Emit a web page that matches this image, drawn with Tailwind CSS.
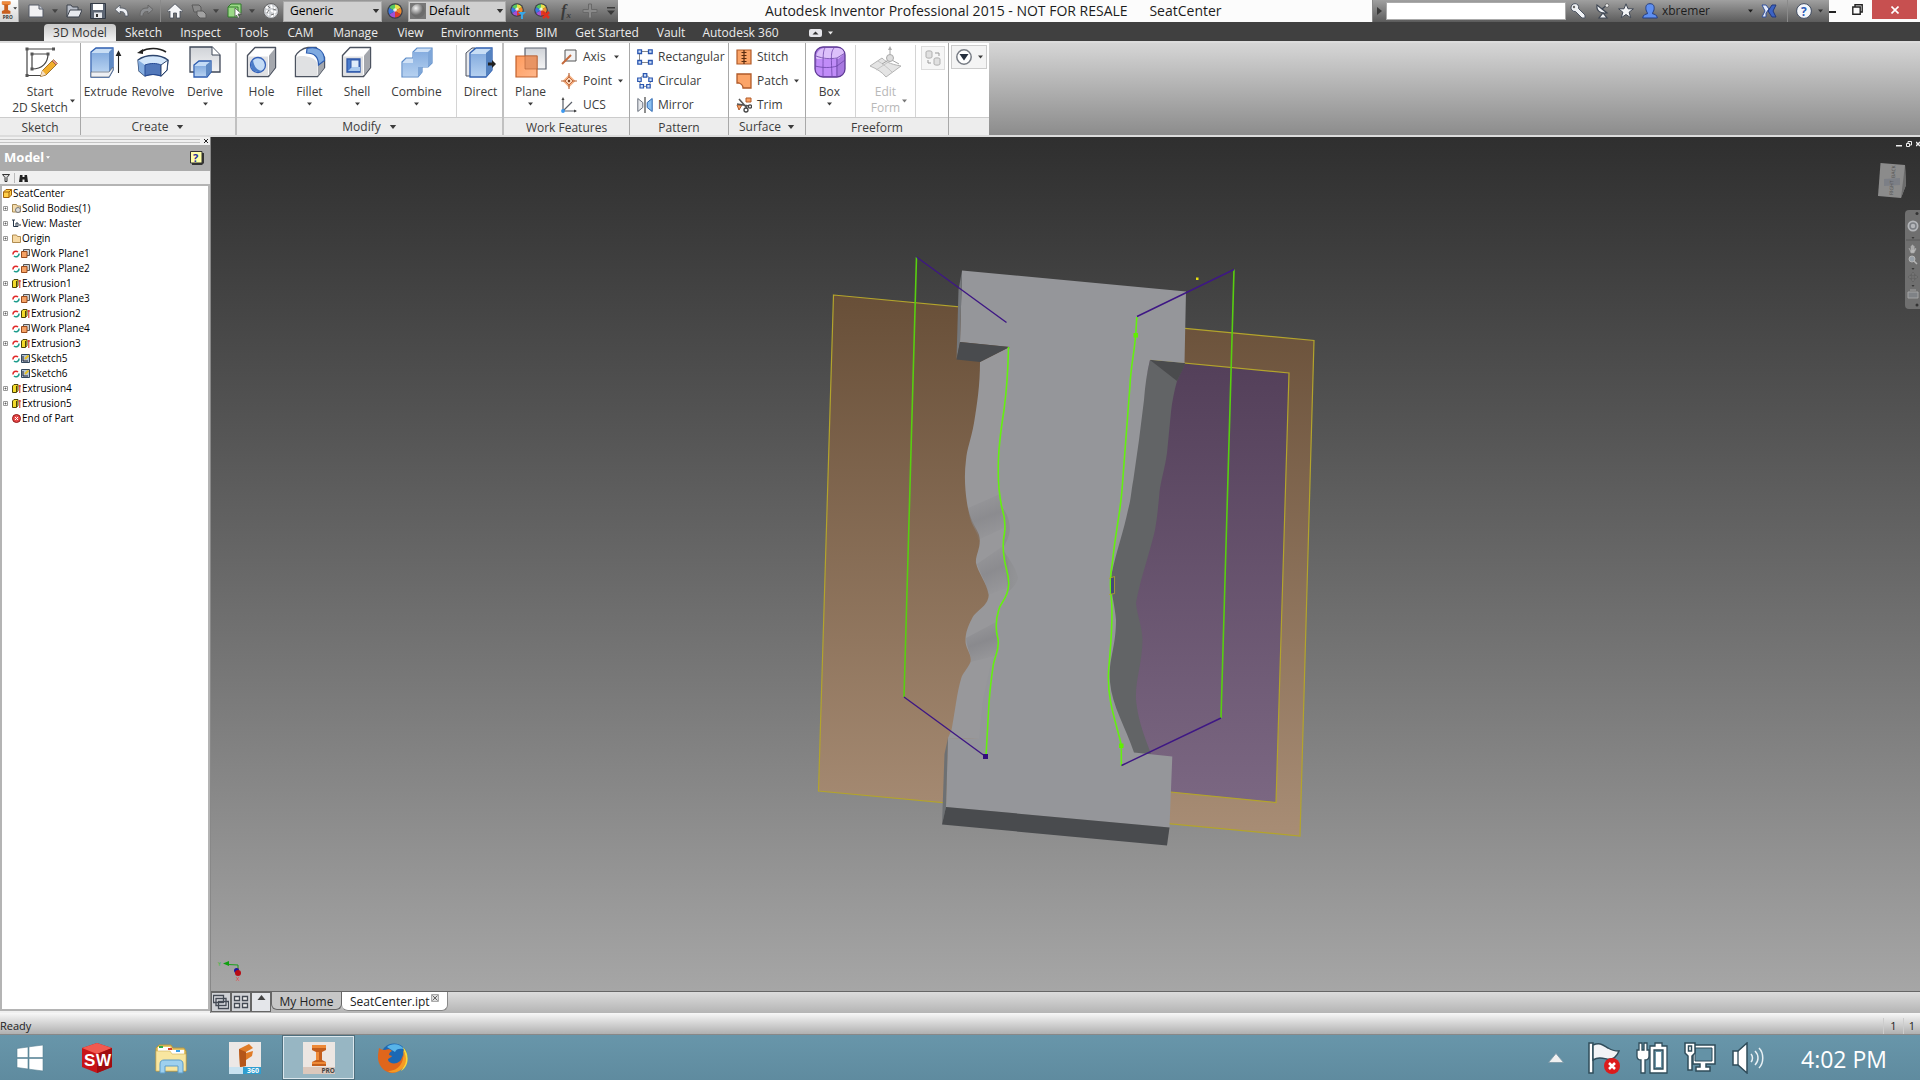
<!DOCTYPE html>
<html lang="en">
<head>
<meta charset="utf-8">
<title>Autodesk Inventor Professional 2015</title>
<script src="https://cdn.jsdelivr.net/npm/@tailwindcss/browser@4"></script>
</head>
<body class="flex h-screen flex-col overflow-hidden bg-[#f0f0f0] font-['Open_Sans','Noto_Sans',sans-serif] text-xs text-[#3c3c3c]">

<!-- Shared symbols and gradients -->
<svg class="absolute size-0" aria-hidden="true">
  <defs>
    <linearGradient id="blue" x1="0" y1="0" x2="0" y2="1"><stop offset="0" stop-color="#86addf"/><stop offset="1" stop-color="#b4d0f0"/></linearGradient>
    <linearGradient id="grey" x1="0" y1="0" x2="0" y2="1"><stop offset="0" stop-color="#d0d3d8"/><stop offset="1" stop-color="#f4f4f5"/></linearGradient>
    <linearGradient id="orange" x1="0" y1="0" x2="1" y2="1"><stop offset="0" stop-color="#ff9a5c"/><stop offset="1" stop-color="#ffb88c"/></linearGradient>
    <linearGradient id="planeFill" x1="0" y1="0" x2="0" y2="1"><stop offset="0" stop-color="#684f38"/><stop offset="1" stop-color="#a88d75"/></linearGradient>
    <linearGradient id="violetFill" x1="0" y1="0" x2="0" y2="1"><stop offset="0" stop-color="#533f59"/><stop offset="1" stop-color="#7b6782"/></linearGradient>
    <linearGradient id="fold" x1=".35" y1="0" x2=".65" y2="1"><stop offset="0" stop-color="#86868a" stop-opacity="0"/><stop offset=".5" stop-color="#86868a"/><stop offset="1" stop-color="#86868a" stop-opacity="0"/></linearGradient>
    <linearGradient id="bump" x1="0" y1="0" x2="1" y2=".3"><stop offset="0" stop-color="#8a8a8d"/><stop offset="1" stop-color="#929396"/></linearGradient>
    <radialGradient id="ball" cx=".35" cy=".3"><stop offset="0" stop-color="#f4f4f4"/><stop offset="1" stop-color="#6c6c6c"/></radialGradient>
  </defs>
  <symbol id="caret" viewBox="0 0 8 5"><path d="M0 0h8L4 5z" fill="currentColor"/></symbol>
  <symbol id="cubebase" viewBox="0 0 32 32">
    <path d="M1.500 9.500 9 1.500h20.500v20l-7 9h-21z" fill="#fff" stroke="#4c5360" stroke-width="1.400" stroke-linejoin="round"/>
    <path d="M23 9.500l6-7v19l-6 8z" fill="#a4a7ad"/>
    <path d="M2.500 10.500H22v19H2.500z" fill="#e0e1e3"/>
  </symbol>
  <symbol id="wheel" viewBox="0 0 16 16">
    <circle cx="8" cy="8" r="7.800" fill="#3b3f48"/>
    <path d="M8 8V1.500A6.500 6.500 0 0 1 13.600 4.700z" fill="#e8e24a"/><path d="M8 8l5.600-3.300a6.500 6.500 0 0 1 0 6.600z" fill="#ee8a2c"/>
    <path d="M8 8l5.600 3.300A6.500 6.500 0 0 1 8 14.500z" fill="#e03c2c"/><path d="M8 8v6.500a6.500 6.500 0 0 1-5.600-3.200z" fill="#a050d8"/>
    <path d="M8 8l-5.600 3.300a6.500 6.500 0 0 1 0-6.600z" fill="#3878e0"/><path d="M8 8L2.400 4.700A6.500 6.500 0 0 1 8 1.500z" fill="#58c860"/>
    <circle cx="8" cy="7" r="1.800" fill="#fff" opacity=".8"/>
  </symbol>
  <symbol id="upd" viewBox="0 0 8 8"><path d="M1 4.500a3 3 0 0 1 5-2.500" fill="none" stroke="#e02828" stroke-width="1.500"/><path d="M7 3.500a3 3 0 0 1-5 2.500" fill="none" stroke="#1d9c8c" stroke-width="1.500"/></symbol>
  <symbol id="wp" viewBox="0 0 9 9"><path d="M2.500.5h6v6h-6z" fill="#cfd2d6" stroke="#555"/><path d="M.5 2.500h5.500v6H.5z" fill="#f5a265" stroke="#9a4b1c"/></symbol>
  <symbol id="ext" viewBox="0 0 9 9"><path d="M.5 2L2 .5h4v6L4.500 8.500h-4z" fill="#f3dc2a" stroke="#4d4308"/><path d="M4.500 2v6" stroke="#4d4308"/><path d="M7.800 9V1M6.500 2h2.500" stroke="#d02818" fill="none"/></symbol>
  <symbol id="sk" viewBox="0 0 9 9"><path d="M.5.5h8v8h-8z" fill="#b4c4d6" stroke="#33475c"/><path d="M2 7h5M2 7V2" stroke="#223" fill="none"/><path d="M4 5L7.500 1.500" stroke="#e8c020" stroke-width="2"/></symbol>
  <symbol id="plus" viewBox="0 0 5 5"><path d="M.5.5h4v4h-4z" fill="#fff" stroke="#9a9a9a"/><path d="M1.500 2.500h2M2.500 1.500v2" stroke="#555" stroke-width=".8"/></symbol>
</svg>

<!-- Title bar -->
<header class="flex h-[22px] shrink-0 items-stretch bg-[#fcfcfc]">
  <div class="flex w-[618px] shrink-0 items-center bg-linear-to-b from-[#989898] to-[#5c5c5c]">
    <button aria-label="Application menu" class="flex h-full w-[19px] items-center border-r border-[#aaa] bg-linear-to-b from-white to-[#d4d4d4]">
      <svg class="h-5 w-[19px]" viewBox="0 0 19 20"><path d="M2 0h9v3L8.500 4v5l2.500 1v3H2v-3l2.500-1V4L2 3z" fill="#c9601f"/><path d="M2 0h9v3H2z" fill="#ef8a3c"/><text x="3" y="18.500" font-size="5" font-weight="700" fill="#333">PRO</text><path d="M14 6h4l-2 2.500z" fill="#333"/></svg>
    </button>
    <nav aria-label="Quick access" class="flex h-full w-[264px] shrink-0 items-center pl-[9px] text-[#444]">
      <button aria-label="New" class="w-4"><svg class="size-4" viewBox="0 0 16 16"><path d="M1 2h10l4 4v8H1z" fill="#f1f1f3" stroke="#555b66"/><path d="M11 2v4h4" fill="#c4c8cf" stroke="#555b66"/></svg></button>
      <svg class="ml-2 mr-2 h-1 w-1.5"><use href="#caret"/></svg>
      <button aria-label="Open" class="w-4"><svg class="size-4" viewBox="0 0 16 16"><path d="M1 14V2h4l1.500 2H12v3" fill="#b9bec8" stroke="#3d434d"/><path d="M1 14L4 7h12l-3 7z" fill="#e8eaee" stroke="#3d434d"/></svg></button>
      <button aria-label="Save" class="ml-2 w-4"><svg class="size-4" viewBox="0 0 16 16"><path d="M.5.5h15v15H.5z" fill="#5d6674" stroke="#333943"/><path d="M3 1h10v6H3z" fill="#fff"/><path d="M4 9.500h8V15H4z" fill="#e6e8ec"/><path d="M6 11h2v3H6z" fill="#333"/></svg></button>
      <button aria-label="Undo" class="ml-2 w-4"><svg class="size-4" viewBox="0 0 16 16"><path d="M6 2v3c6 0 8 2 8 8h-3c0-3-1-4.500-5-4.500V11L1 6.500z" fill="#eef0f4" stroke="#4c5460" stroke-width=".8"/></svg></button>
      <button aria-label="Redo" class="ml-2 w-4"><svg class="size-4" viewBox="0 0 16 16"><path d="M10 2v3c-6 0-8 2-8 8h3c0-3 1-4.500 5-4.500V11l5-4.500z" fill="#8d8f92" stroke="#666"/></svg></button>
      <span class="mx-1.5 h-full w-px bg-[#8a8a8a]"></span>
      <button aria-label="Home" class="w-4"><svg class="size-4" viewBox="0 0 16 16"><path d="M8 .8l7.500 7-1.200 1.200L13 8v7H9.500v-5h-3v5H3V8L1.700 9 .5 7.800z" fill="#f4f5f7" stroke="#434a56" stroke-width=".8"/></svg></button>
      <button aria-label="Update" class="ml-2 w-4"><svg class="size-4" viewBox="0 0 16 16"><path d="M1 2h7l2 2v5H3z" fill="#8b8b8b" stroke="#5a5a5a"/><path d="M6 8h6l3 3v4H9l-3-3z" fill="#a2a2a2" stroke="#5a5a5a"/></svg></button>
      <svg class="ml-1.5 mr-2 h-1 w-1.5"><use href="#caret"/></svg>
      <button aria-label="Select" class="w-4"><svg class="size-4" viewBox="0 0 16 16"><path d="M1 4l3-3h10v9l-3 4H1z" fill="#9bd987" stroke="#2f7a28"/><path d="M1 4h10v10" fill="none" stroke="#2f7a28"/><path d="M8 5l6.500 6H11l1.500 3.500-1.500.7L9.500 12 8 13.500z" fill="#fff" stroke="#444" stroke-width=".7"/></svg></button>
      <svg class="ml-1.5 mr-2 h-1 w-1.5"><use href="#caret"/></svg>
      <button aria-label="Material browser" class="w-4"><svg class="size-4" viewBox="0 0 16 16"><circle cx="8" cy="8" r="7.500" fill="#c9ccd0" stroke="#666"/><path d="M3 4l2 1M8 2l1 3M12 4l-1 2M3 8l3 1M8 7l2 2M13 8l-2 2M5 12l1-1M9 14v-2M12 12l-1-1" stroke="#fff" stroke-width="2"/><path d="M5 3l2 2M10 6l3 1M6 7l-2 3M11 11l-3 1" stroke="#777"/></svg></button>
    </nav>
    <span class="relative flex h-[21px] w-[99px] items-center">
      <select aria-label="Material" class="h-full w-full appearance-none border border-[#aaa] bg-[#cfcfcf] pl-1.5 text-xs text-black"><option>Generic</option></select>
      <svg class="pointer-events-none absolute right-0.5 h-1 w-2 text-[#333]"><use href="#caret"/></svg>
    </span>
    <svg class="mx-[5px] size-4"><use href="#wheel"/></svg>
    <span class="relative flex h-[21px] w-[98px] items-center">
      <select aria-label="Appearance" class="h-full w-full appearance-none border border-[#aaa] bg-[#cfcfcf] pl-5 text-xs text-black"><option>Default</option></select>
      <svg class="pointer-events-none absolute left-0.5 size-4" viewBox="0 0 16 16"><path d="M0 0h16v16H0z" fill="#777"/><circle cx="8" cy="8" r="7" fill="url(#ball)"/></svg>
      <svg class="pointer-events-none absolute right-0.5 h-1 w-2 text-[#333]"><use href="#caret"/></svg>
    </span>
    <nav aria-label="Appearance tools" class="flex items-center gap-2 pl-1 text-[#3a3a3a]">
      <button aria-label="Adjust"><svg class="block size-4" viewBox="0 0 16 16"><use href="#wheel" width="14" height="14"/><path d="M8 9h8l-3 3v4h-2v-4z" fill="#38a8e8"/></svg></button>
      <button aria-label="Clear"><svg class="block size-4" viewBox="0 0 16 16"><use href="#wheel" width="14" height="14"/><path d="M9 9l6 6M15 9l-6 6" stroke="#e0301c" stroke-width="2.500"/></svg></button>
      <button aria-label="Parameters" class="w-4 font-['Liberation_Serif',serif] text-base leading-4 font-bold italic">f<sub class="text-[9px]">x</sub></button>
      <button aria-label="Add"><svg class="block size-4" viewBox="0 0 16 16"><path d="M6.500 1h3v5.500H15v3H9.500V15h-3V9.500H1v-3h5.500z" fill="#8a8a8a" stroke="#686868"/></svg></button>
      <button aria-label="Customize"><svg class="block h-2 w-2.5" viewBox="0 0 10 8"><path d="M1 0h8v1.500H1zM1 3.500h8L5 8z" fill="currentColor"/></svg></button>
    </nav>
  </div>
  <h1 class="flex-1 pl-[147px] text-[14px] leading-[22px] whitespace-pre text-[#1c1c1c]">Autodesk Inventor Professional 2015 - NOT FOR RESALE      SeatCenter</h1>
  <div class="flex w-[457px] shrink-0 items-center border-l border-[#888] bg-linear-to-b from-[#a0a0a0] to-[#5c5c5c] text-[#333]">
    <svg class="mx-1 h-2 w-[5px]" viewBox="0 0 5 8"><path d="M0 0l5 4-5 4z" fill="#3a3a3a"/></svg>
    <input aria-label="Search" class="h-[18px] w-[180px] border border-[#aaa] bg-white px-1">
    <div class="flex items-center gap-2 pl-1">
      <svg class="size-4" viewBox="0 0 16 16"><path d="M1 4a4 4 0 0 1 7-2 4 4 0 0 1 .5 3.500L15 12v3h-3L5.500 8.500A4 4 0 0 1 1 4z" fill="#f0f2f5" stroke="#4c5462"/><circle cx="4" cy="4" r="1.200" fill="#666"/></svg>
      <svg class="size-4" viewBox="0 0 16 16"><path d="M3 2c-1 6 4 9 10 8L8 6zM5 15h8l-4-5z" fill="#f0f2f5" stroke="#3f4754" stroke-width="1.200"/><path d="M8 6l5-4" stroke="#3f4754" stroke-width="1.200"/><circle cx="13" cy="2.500" r="1.800" fill="#eee" stroke="#444" stroke-width=".6"/></svg>
      <svg class="size-4" viewBox="0 0 16 16"><path d="M8 .8l2 5h5.400l-4.300 3.400 1.600 5.500L8 11.500l-4.700 3.200 1.600-5.500L.6 5.800H6z" fill="#f3f4f6" stroke="#3f4754"/></svg>
      <svg class="size-4" viewBox="0 0 16 16"><path d="M8 .7c4 0 4.500 3 4 6-.3 2-1.500 2.500-1.500 4 2 .5 4.500 1 4.800 4.300H.7C1 11.700 3.500 11.200 5.500 10.700c0-1.500-1.200-2-1.500-4-.5-3 0-6 4-6z" fill="#5f8ff0" stroke="#223c80"/></svg>
    </div>
    <button class="ml-1 flex w-[91px] items-center justify-between text-xs text-[#1c1c1c]"><span>xbremer</span><svg class="h-1 w-[5px]"><use href="#caret"/></svg></button>
    <svg class="ml-2 size-4" viewBox="0 0 16 16"><path d="M1 2h4l3 4-3 4 0 4H1l3-6z" fill="#e4ebfa" stroke="#32519c"/><path d="M15 2h-4L7 8l4 6h4l-3-6z" fill="#3c63c4" stroke="#22387c"/></svg>
    <span class="ml-2.5 h-full w-px bg-[#8a8a8a]"></span>
    <button aria-label="Help" class="ml-2"><svg class="block size-4" viewBox="0 0 16 16"><circle cx="8" cy="8" r="7.400" fill="#f4f6fa" stroke="#3f4b60"/><text x="5" y="12.500" font-size="12" font-weight="700" fill="#2c5cb8">?</text></svg></button>
    <svg class="ml-1.5 h-1 w-[5px]"><use href="#caret"/></svg>
  </div>
  <div class="flex w-[91px] shrink-0 items-start">
    <button aria-label="Minimize" class="mt-[11px] h-0.5 w-[7px] bg-[#222]"></button>
    <button aria-label="Restore" class="ml-4 mt-1"><svg class="block size-[11px]" viewBox="0 0 11 11"><path d="M.8 3h7.400v7.200H.8zM3 3V.8h7.200V8H8.200" fill="none" stroke="#222" stroke-width="1.400"/></svg></button>
    <button aria-label="Close" class="ml-[9px] flex h-[19px] w-[45px] items-center justify-center bg-[#c75050]"><svg class="size-2" viewBox="0 0 8 8"><path d="M.5.5l7 7M7.500.5l-7 7" stroke="#fff" stroke-width="1.600"/></svg></button>
  </div>
</header>

<!-- Ribbon tabs -->
<nav aria-label="Ribbon" class="flex h-[19px] shrink-0 items-end bg-[#404040] pl-11 text-xs leading-4 text-[#ececec]">
  <a href="#" class="h-[17px] w-[72px] rounded-t-sm bg-linear-to-b from-[#c8c8c8] to-[#f4f4f4] pt-px text-center text-[#333]">3D Model</a>
  <a href="#" class="w-[55px] text-center">Sketch</a>
  <a href="#" class="w-[59px] text-center">Inspect</a>
  <a href="#" class="w-[47px] text-center">Tools</a>
  <a href="#" class="w-[47px] text-center">CAM</a>
  <a href="#" class="w-[63px] text-center">Manage</a>
  <a href="#" class="w-[47px] text-center">View</a>
  <a href="#" class="w-[91px] text-center">Environments</a>
  <a href="#" class="w-[43px] text-center">BIM</a>
  <a href="#" class="w-[78px] text-center">Get Started</a>
  <a href="#" class="w-[50px] text-center">Vault</a>
  <a href="#" class="w-[89px] text-center">Autodesk 360</a>
  <button aria-label="Minimize ribbon" class="ml-6 flex h-[17px] items-center gap-1.5"><svg class="h-2 w-[13px]" viewBox="0 0 13 8"><rect width="13" height="8" rx="2" fill="#e6e6ea"/><path d="M3.500 5.500h6l-3-3z" fill="#333"/></svg><svg class="h-1 w-[5px]"><use href="#caret"/></svg></button>
</nav>

<!-- Ribbon -->
<div class="flex h-[96px] shrink-0 border-y-2 border-[#dcdcdc] bg-linear-to-b from-[#d6d6d6] to-[#8c8c8c]">
  <section class="flex w-[81px] flex-col border-r border-[#a8a8a8] bg-white">
    <div class="flex flex-1 justify-center pt-0.5">
      <button class="relative flex w-[66px] flex-col items-center leading-4">
        <svg class="mt-px mb-1.5 size-8 overflow-visible" viewBox="0 0 32 32"><path d="M3 3h26M3 3v26M3 29.500h16" stroke="#444" stroke-width="1.200" fill="none"/><path d="M8 8h16c0 9-6 15-16 15z" fill="#fff" stroke="#444" stroke-width="1.200"/><path d="M1.500 1.500h3v3h-3zM28 1.500h3v3h-3zM1.500 28h3v3h-3zM6.500 6.500h3v3h-3zM22.500 6.500h3v3h-3zM6.500 21.500h3v3h-3z" fill="#555"/><path d="M16.500 30.500l2-6L28 15l4 4-10 10z" fill="#f2ae2c" stroke="#8a5a18" stroke-width=".8"/><path d="M28 15l1.500-1.500 4 4L32 19z" fill="#e8938a" stroke="#8a5a18" stroke-width=".6"/><path d="M16.500 30.500l2-6 3.500 4z" fill="#f3dcc0"/></svg>
        <span>Start</span><span>2D Sketch</span>
        <svg class="absolute -right-0.5 bottom-3.5 h-1 w-[5px]"><use href="#caret"/></svg>
      </button>
    </div>
    <h2 class="h-[18px] border-t border-[#ccc] bg-[#ededed] text-center leading-[19px]">Sketch</h2>
  </section>

  <section class="flex w-[156px] flex-col border-r-2 border-[#c0c0c0] bg-white">
    <div class="flex flex-1 pt-0.5 leading-4">
      <button class="flex w-[49px] flex-col items-center"><svg class="mt-px mb-1.5 size-8 overflow-visible" viewBox="0 0 32 32"><path d="M1 6l5-4h17v22l-4 7H1z" fill="#c9def5" stroke="#2f5fb0" stroke-width="1.300"/><path d="M19 6l4-4v22l-4 7z" fill="#5f8ac4"/><path d="M2 7h17v18H2z" fill="url(#blue)"/><path d="M1 26h18l4-5v3l-4 7H1z" fill="#eef0f4" stroke="#5a6674" stroke-width=".7"/><path d="M28.500 27V7M26.500 9.500l2-4 2 4z" stroke="#222" fill="#222" stroke-width="1.100"/></svg>Extrude</button>
      <button class="flex w-[46px] flex-col items-center"><svg class="mt-px mb-1.5 size-8 overflow-visible" viewBox="0 0 32 32"><path d="M4 5.500c7-4 18-4 25 .5" fill="none" stroke="#222" stroke-width="1.600"/><path d="M0 7l6-4v5z" fill="#222"/><path d="M1 14c8-6 22-6 30 0l-1 10-6 6c-5-2-11-2-16 0l-6-5z" fill="#d3e6fa" stroke="#2c456e" stroke-width="1.300"/><path d="M1 14l7 5v11l-6-5z" fill="#86aee0"/><path d="M8 19c5-2 12-2 16 0v11c-5-2-11-2-16 0z" fill="#5278ba" stroke="#264a94"/><path d="M24 19l7-5-1 10-6 6z" fill="#fff" stroke="#2c456e"/></svg>Revolve</button>
      <button class="flex w-[58px] flex-col items-center"><svg class="mt-px mb-1.5 size-8 overflow-visible" viewBox="0 0 32 32"><path d="M1 1h22l8 8v17H1z" fill="url(#grey)" stroke="#3f4858" stroke-width="1.300"/><path d="M23 1v8h8" fill="#fff" stroke="#3f4858"/><path d="M5 19l5-4h12v11l-4 5H5z" fill="#c4dbf5" stroke="#2c5cb0" stroke-width="1.300"/><path d="M17 19l5-4v11l-5 5z" fill="#5f8ac4"/><path d="M6 20h11v10H6z" fill="url(#blue)"/></svg>Derive<svg class="mt-0.5 h-1 w-[5px]"><use href="#caret"/></svg></button>
    </div>
    <h2 class="flex h-[18px] items-center justify-center gap-2 border-t border-[#ccc] bg-[#ededed] leading-[19px]">Create <svg class="h-1 w-2"><use href="#caret"/></svg></h2>
  </section>

  <section class="flex w-[267px] flex-col border-r-2 border-[#c0c0c0] bg-white">
    <div class="flex flex-1 pt-0.5 leading-4">
      <button class="flex w-[49px] flex-col items-center"><svg class="mt-px mb-1.5 size-8 overflow-visible" viewBox="0 0 32 32"><use href="#cubebase" width="32" height="32"/><circle cx="12" cy="19" r="7.500" fill="#c4dcf6" stroke="#3460b8" stroke-width="1.300"/><path d="M7 14a7 7 0 0 0 0 10c3 3 7 2 9 1-5-1-8-4-9-11z" fill="#4a7cc8"/></svg>Hole<svg class="mt-0.5 h-1 w-[5px]"><use href="#caret"/></svg></button>
      <button class="flex w-[47px] flex-col items-center"><svg class="mt-px mb-1.5 size-8 overflow-visible" viewBox="0 0 32 32"><path d="M1.500 10C3 7 8 2 14 1.500h8l8.500 10v10l-7 9h-22z" fill="#fff" stroke="#4c5360" stroke-width="1.400"/><path d="M2.500 11c4-2 19-1 21 7v12h-21z" fill="#e0e1e3"/><path d="M24 18l6-4v8l-6 8z" fill="#a4a7ad"/><path d="M13 2.500c10-3 17.500 2 17.500 12l-6 4.500c0-8-4-12-12-12z" fill="#7faae0" stroke="#2c5cb0" stroke-width="1.200"/></svg>Fillet<svg class="mt-0.5 h-1 w-[5px]"><use href="#caret"/></svg></button>
      <button class="flex w-[48px] flex-col items-center"><svg class="mt-px mb-1.5 size-8 overflow-visible" viewBox="0 0 32 32"><use href="#cubebase" width="32" height="32"/><path d="M6 13h13v13H6z" fill="#4a7ccc" stroke="#2f57a8" stroke-width="1.300"/><path d="M10 14h8v8h-8z" fill="#dfecfa" stroke="#2f57a8"/><path d="M7 25l4-4h8v4z" fill="#a9c9ee"/></svg>Shell<svg class="mt-0.5 h-1 w-[5px]"><use href="#caret"/></svg></button>
      <button class="flex w-[75px] flex-col items-center pr-1"><svg class="mt-px mb-1.5 size-8 overflow-visible" viewBox="0 0 32 32"><path d="M1 16l4-4h7V6l4-4h15v15l-4 4h-6v5l-4 5H1z" fill="#cfe1f6" stroke="#5c8cc8" stroke-width="1.200"/><path d="M12 6h15v15H12zM2 17h10v4h5v9H2z" fill="url(#blue)"/><path d="M27 6l4-4v15l-4 4zM17 21h4v5l-4 5z" fill="#7ea6d8"/></svg>Combine<svg class="mt-0.5 h-1 w-[5px]"><use href="#caret"/></svg></button>
      <button class="flex flex-1 flex-col items-center border-l border-[#d4d4d4] pl-0.5"><svg class="mt-px mb-1.5 size-8 overflow-visible" viewBox="0 0 32 32"><path d="M1 7l6-5h3v28H1z" fill="#e6e8ec" stroke="#4c5360"/><path d="M5 7l6-5h16v22l-6 7H5z" fill="#c8def5" stroke="#2f5fb0" stroke-width="1.300"/><path d="M21 7l6-5v22l-6 7z" fill="#5482c0"/><path d="M6 8h15v22H6z" fill="url(#blue)"/><path d="M23 16.500h4V14l4 4-4 4v-2.500h-4z" fill="#222"/></svg>Direct</button>
    </div>
    <h2 class="flex h-[18px] items-center justify-center gap-2 border-t border-[#ccc] bg-[#ededed] leading-[19px]">Modify <svg class="h-1 w-2"><use href="#caret"/></svg></h2>
  </section>

  <section class="flex w-[126px] flex-col border-r border-[#a8a8a8] bg-white">
    <div class="flex flex-1 pt-0.5">
      <button class="flex w-[57px] flex-col items-center pr-1 leading-4"><svg class="mt-px mb-1.5 size-8 overflow-visible" viewBox="0 0 32 32"><path d="M10 2h21v21H10z" fill="url(#grey)" stroke="#5b6270" stroke-width="1.200"/><path d="M1 10h21v21H1z" fill="url(#orange)" stroke="#c0602c" stroke-width="1.200"/><path d="M10 10h12v13H10z" fill="#e89464" stroke="#b05a30" stroke-width=".6"/></svg>Plane<svg class="mt-0.5 h-1 w-[5px]"><use href="#caret"/></svg></button>
      <div class="flex flex-col">
        <button class="flex h-6 items-center gap-1.5"><svg class="size-4" viewBox="0 0 16 16"><path d="M4 1h11v11H4z" fill="#f2f3f5" stroke="#555"/><path d="M1 15L10 6" stroke="#c46a3c" stroke-width="2"/></svg>Axis<svg class="ml-0.5 h-1 w-[5px]"><use href="#caret"/></svg></button>
        <button class="flex h-6 items-center gap-1.5"><svg class="size-4" viewBox="0 0 16 16"><path d="M8 1.500l6.500 6.500L8 14.500 1.500 8z" fill="#f3b184"/><path d="M8 0v16M0 8h16" stroke="#b8683c" stroke-width="1.200"/><path d="M8 4l4 4-4 4-4-4z" fill="#fbd6ba" stroke="#c46a3c"/><circle cx="8" cy="8" r="1.200" fill="#7a3c1c"/></svg>Point<svg class="h-1 w-[5px]"><use href="#caret"/></svg></button>
        <button class="flex h-6 items-center gap-1.5"><svg class="size-4" viewBox="0 0 16 16"><path d="M2 2v12h13M2 14l9-9" stroke="#5a5f68" fill="none" stroke-width="1.200"/><path d="M.5 3L2 0l1.500 3zM13 12.500l3 1.500-3 1.500z" fill="#444"/><circle cx="2" cy="14" r="1.900" fill="#3c98f0"/></svg>UCS</button>
      </div>
    </div>
    <h2 class="h-[18px] border-t border-[#ccc] bg-[#ededed] text-center leading-[19px]">Work Features</h2>
  </section>

  <section class="flex w-[99px] flex-col border-r border-[#a8a8a8] bg-white">
    <div class="flex flex-1 flex-col pt-0.5 pl-[7px]">
      <button class="flex h-6 items-center gap-[5px]"><svg class="size-4 shrink-0" viewBox="0 0 16 16"><path d="M2.500 2.500h11M2.500 2.500v11h11" stroke="#888" fill="none"/><path d="M.8.800h3.700v3.700H.8zM11.500.800h3.700v3.700h-3.700zM.8 11.500h3.700v3.700H.8zM11.500 11.500h3.700v3.700h-3.700z" fill="#cfe0fa" stroke="#2a56b0" stroke-width="1.300"/></svg>Rectangular</button>
      <button class="flex h-6 items-center gap-[5px]"><svg class="size-4 shrink-0" viewBox="0 0 16 16"><circle cx="8" cy="8" r="5.500" fill="none" stroke="#888"/><path d="M6.300.700h3.500v3.500H6.300zM.7 5h3.500v3.500H.7zM11.800 5h3.500v3.500h-3.500zM3 11.500h3.500V15H3zM9.700 11.500h3.500V15H9.700z" fill="#cfe0fa" stroke="#2a56b0" stroke-width="1.200"/></svg>Circular</button>
      <button class="flex h-6 items-center gap-[5px]"><svg class="size-4 shrink-0" viewBox="0 0 16 16"><path d="M8 0v16" stroke="#444" stroke-width="1.200"/><path d="M.8 1.500v13l5-4v-5z" fill="#e6e8ec" stroke="#68707c"/><path d="M15.200 1.500v13l-5-4v-5z" fill="#8cc0f0" stroke="#2c66b0"/></svg>Mirror</button>
    </div>
    <h2 class="h-[18px] border-t border-[#ccc] bg-[#ededed] text-center leading-[19px]">Pattern</h2>
  </section>

  <section class="flex w-[77px] flex-col border-r border-[#a8a8a8] bg-white">
    <div class="flex flex-1 flex-col pt-0.5 pl-[7px]">
      <button class="flex h-6 items-center gap-[5px]"><svg class="size-4" viewBox="0 0 16 16"><path d="M1 1h14v14H1z" fill="#fba468" stroke="#b05a28" stroke-width="1.200"/><path d="M8 1v14M5.500 3.500h5M5.500 6.500h5M5.500 9.500h5M5.500 12.500h5" stroke="#5c2c10" stroke-width="1.200"/></svg>Stitch</button>
      <button class="flex h-6 items-center gap-[5px]"><svg class="size-4" viewBox="0 0 16 16"><path d="M1 1h14v14H7c0-3-1-4-4-5H1z" fill="#fba468" stroke="#b05a28" stroke-width="1.300"/></svg>Patch<svg class="ml-px h-1 w-[5px]"><use href="#caret"/></svg></button>
      <button class="flex h-6 items-center gap-[5px]"><svg class="size-4" viewBox="0 0 16 16"><path d="M10 1h5v4h-5zM1 8h5l-3 5z" fill="#fba468" stroke="#b05a28"/><path d="M3 2l8 9M1 7l12 2" stroke="#555" stroke-width="1.600"/><circle cx="10" cy="13" r="2" fill="none" stroke="#444" stroke-width="1.300"/><circle cx="14" cy="9.500" r="1.600" fill="none" stroke="#444" stroke-width="1.300"/></svg>Trim</button>
    </div>
    <h2 class="flex h-[18px] items-center justify-center gap-1.5 border-t border-[#ccc] bg-[#ededed] leading-[19px]">Surface <svg class="h-1 w-2"><use href="#caret"/></svg></h2>
  </section>

  <section class="flex w-[143px] flex-col border-r border-[#a8a8a8] bg-white">
    <div class="flex flex-1 pt-0.5 leading-4">
      <button class="flex w-[49px] flex-col items-center pr-0.5"><svg class="mt-px mb-1.5 size-8 overflow-visible" viewBox="0 0 32 32"><rect x="1" y="1" width="30" height="30" rx="8" fill="#a879e0" stroke="#5e3a94" stroke-width="1.300"/><path d="M2 12c0-6 4-10 9-10h12c4 0 7 2 7 6l-6 5H3z" fill="#dcc0fa"/><path d="M3 13h19v17H9c-4 0-7-3-7-7z" fill="#c08cf8"/><path d="M11 2c-2 3-2 8-2 28M20 2c-3 4-3 6-2 28M1 20c8 2 16 2 22 0l8-6M2 10c8 3 14 3 21 2l8-5M23 12v18" fill="none" stroke="#6c44a8" stroke-width=".8"/></svg>Box<svg class="mt-0.5 h-1 w-[5px]"><use href="#caret"/></svg></button>
      <button disabled class="relative flex w-[61px] flex-col items-center border-x border-[#d4d4d4] text-[#b8b8b8]"><svg class="mt-px mb-1.5 size-8 overflow-visible" viewBox="0 0 32 32"><path d="M0 20l12-8c3 3 7 6 19 8L16 31C12 26 7 23 0 20z" fill="#e4e4e4" stroke="#b4b4b4"/><path d="M8 15c5 3 10 7 14 11M6 24l14-9" stroke="#c4c4c4" fill="none"/><path d="M20 13V2M20 13l-8 5M20 13l9 5" stroke="#a4a4a4"/><circle cx="20" cy="12" r="3.500" fill="#ddd" stroke="#aaa"/><path d="M18 4l2-4 2 4z" fill="#aaa"/></svg><span>Edit</span><span>Form</span><svg class="absolute right-2 bottom-3.5 h-1 w-[5px] text-[#777]"><use href="#caret"/></svg></button>
      <button disabled aria-label="Convert" class="mt-px ml-[5px] flex size-6 items-center justify-center border border-[#ddd] bg-[#f6f6f6]"><svg class="size-4" viewBox="0 0 16 16"><path d="M1 2c0-1.500 6-1.500 6 0v5c0 1.500-6 1.500-6 0zM9 9c0-1.500 6-1.500 6 0v5c0 1.500-6 1.500-6 0z" fill="#e0e0e0" stroke="#b0b0b0"/><path d="M10 3h4v3M3 10v3h3" fill="none" stroke="#999"/></svg></button>
    </div>
    <h2 class="h-[18px] border-t border-[#ccc] bg-[#ededed] text-center leading-[19px]">Freeform</h2>
  </section>

  <section class="flex w-10 flex-col bg-white">
    <div class="flex-1 pt-0.5 pl-0.5">
      <button aria-label="Display options" class="flex h-6 w-9 items-center justify-center gap-1.5 border border-[#ccc] bg-[#f4f4f4]"><svg class="size-4" viewBox="0 0 16 16"><circle cx="8" cy="8" r="7.200" fill="#fff" stroke="#777c84" stroke-width="1.500"/><path d="M3.500 5h9L8 11.500z" fill="#26303e"/></svg><svg class="h-1 w-[5px]"><use href="#caret"/></svg></button>
    </div>
    <div class="h-[18px] border-t border-[#ccc] bg-[#ededed]"></div>
  </section>
</div>

<!-- Workspace -->
<main class="flex min-h-0 flex-1">
  <aside class="flex w-[211px] shrink-0 flex-col border-r border-[#888] bg-[#f0f0f0] pb-0.5">
    <div class="flex h-2 items-center gap-1 pr-0.5"><span class="h-1 flex-1 border-y border-[#c4c4c4]"></span><svg class="size-1" viewBox="0 0 4 4"><path d="M0 0l4 4M4 0L0 4" stroke="#222"/></svg></div>
    <div class="flex h-[26px] shrink-0 items-center justify-between bg-[#ababab] pr-1.5 pl-1">
      <button class="flex items-center gap-0.5 font-['Noto_Sans',sans-serif] text-[13px] font-bold text-white">Model<svg class="h-[3px] w-1"><use href="#caret"/></svg></button>
      <button aria-label="Help"><svg class="block size-3.5" viewBox="0 0 14 14"><path d="M2 2h12v10l-2 2H2z" fill="#333"/><path d="M.5.5h11.500v11.500H.5z" fill="#ffffa8" stroke="#333"/><text x="3" y="10.500" font-size="11" font-weight="700" fill="#2430a0">?</text></svg></button>
    </div>
    <div class="flex h-[13px] shrink-0 items-center gap-1 pl-0.5">
      <svg class="size-2" viewBox="0 0 8 8"><path d="M.5.500h7l-2.500 3v4h-2v-4z" fill="#ddd" stroke="#333"/></svg>
      <span class="h-2.5 w-px bg-[#bbb]"></span>
      <svg class="h-2 w-[9px]" viewBox="0 0 9 8"><path d="M1 1h2.500v2h2V1H8l1 7H5.500V5.500h-2V8H0z" fill="#222"/></svg>
    </div>
    <ul class="min-h-0 flex-1 border-2 border-[#b4b4b4] bg-white text-[10px] leading-[15px] whitespace-nowrap text-black">
      <li class="flex h-[15px] items-center gap-px"><svg class="ml-px size-[9px]" viewBox="0 0 9 9"><path d="M.5 3L3 .5h5.500V6L6 8.500H.5z" fill="#ffcf48" stroke="#a06008"/><path d="M.5 3H6v5.500M6 3L8.500.5" fill="none" stroke="#a06008"/></svg>SeatCenter</li>
      <li class="flex h-[15px] items-center gap-px"><svg class="ml-px mr-[3px] size-[5px]"><use href="#plus"/></svg><svg class="size-[9px]" viewBox="0 0 9 9"><path d="M.5.500h4l1 1.500h3v6h-8z" fill="#f4dcae" stroke="#a68a54"/><circle cx="6" cy="6" r="2.500" fill="#ddd" stroke="#777"/></svg>Solid Bodies(1)</li>
      <li class="flex h-[15px] items-center gap-px"><svg class="ml-px mr-[3px] size-[5px]"><use href="#plus"/></svg><svg class="size-[9px]" viewBox="0 0 9 9"><path d="M0 1h3M1.500 1v6.500H4M4 4h2v3.500H4zM7 6h2" stroke="#234" fill="none"/></svg>View: Master</li>
      <li class="flex h-[15px] items-center gap-px"><svg class="ml-px mr-[3px] size-[5px]"><use href="#plus"/></svg><svg class="size-[9px]" viewBox="0 0 9 9"><path d="M.5 1h4l1 1.500h3v6h-8z" fill="#f6d9a4" stroke="#b08c50"/></svg>Origin</li>
      <li class="flex h-[15px] items-center gap-px pl-2.5"><svg class="size-2"><use href="#upd"/></svg><svg class="size-[9px]"><use href="#wp"/></svg>Work Plane1</li>
      <li class="flex h-[15px] items-center gap-px pl-2.5"><svg class="size-2"><use href="#upd"/></svg><svg class="size-[9px]"><use href="#wp"/></svg>Work Plane2</li>
      <li class="flex h-[15px] items-center gap-px"><svg class="ml-px mr-[3px] size-[5px]"><use href="#plus"/></svg><svg class="size-[9px]"><use href="#ext"/></svg>Extrusion1</li>
      <li class="flex h-[15px] items-center gap-px pl-2.5"><svg class="size-2"><use href="#upd"/></svg><svg class="size-[9px]"><use href="#wp"/></svg>Work Plane3</li>
      <li class="flex h-[15px] items-center gap-px"><svg class="ml-px mr-[3px] size-[5px]"><use href="#plus"/></svg><svg class="size-2"><use href="#upd"/></svg><svg class="size-[9px]"><use href="#ext"/></svg>Extrusion2</li>
      <li class="flex h-[15px] items-center gap-px pl-2.5"><svg class="size-2"><use href="#upd"/></svg><svg class="size-[9px]"><use href="#wp"/></svg>Work Plane4</li>
      <li class="flex h-[15px] items-center gap-px"><svg class="ml-px mr-[3px] size-[5px]"><use href="#plus"/></svg><svg class="size-2"><use href="#upd"/></svg><svg class="size-[9px]"><use href="#ext"/></svg>Extrusion3</li>
      <li class="flex h-[15px] items-center gap-px pl-2.5"><svg class="size-2"><use href="#upd"/></svg><svg class="size-[9px]"><use href="#sk"/></svg>Sketch5</li>
      <li class="flex h-[15px] items-center gap-px pl-2.5"><svg class="size-2"><use href="#upd"/></svg><svg class="size-[9px]"><use href="#sk"/></svg>Sketch6</li>
      <li class="flex h-[15px] items-center gap-px"><svg class="ml-px mr-[3px] size-[5px]"><use href="#plus"/></svg><svg class="size-[9px]"><use href="#ext"/></svg>Extrusion4</li>
      <li class="flex h-[15px] items-center gap-px"><svg class="ml-px mr-[3px] size-[5px]"><use href="#plus"/></svg><svg class="size-[9px]"><use href="#ext"/></svg>Extrusion5</li>
      <li class="flex h-[15px] items-center gap-px pl-2.5"><svg class="size-[9px]" viewBox="0 0 9 9"><circle cx="4.500" cy="4.500" r="4" fill="#e84848" stroke="#901818"/><path d="M3 3l3 3M6 3L3 6" stroke="#fff"/></svg>End of Part</li>
    </ul>
  </aside>

  <div class="flex min-w-0 flex-1 flex-col">
    <!-- 3D viewport -->
    <div class="relative min-h-0 flex-1 overflow-hidden bg-linear-to-b from-[#2f2f2f] to-[#a6a6a6]">
      <svg class="absolute inset-0 h-full w-full" viewBox="211 137 1709 854" role="img" aria-label="SeatCenter model">
        <!-- work planes -->
        <path d="M833.500 295L1314 340.500 1300 836 818.500 791z" fill="url(#planeFill)" stroke="#b3a42c" stroke-width="1.200"/>
        <path d="M1100 355L1289 373 1276 802.500 1100 785z" fill="url(#violetFill)" stroke="#b3a42c" stroke-width="1.200"/>
        <!-- right cut faces -->
        <path d="M1150 360L1185 363 1183 368 1177 381C1174 392 1172 402 1171 412L1167 453C1165 468 1161 480 1159.500 492 1158 510 1157 518 1155 530 1150 552 1140 580 1136 603 1137 615 1142 625 1142.500 640 1142 665 1135 680 1136 700 1138 722 1146 740 1151 754L1130 756 1095 690 1105 560z" fill="#626466"/>
        <path d="M1150 360L1185 363 1183 369 1177 381z" fill="#4a4b4d"/>
        <!-- front face -->
        <path d="M962 270.500L1186 291.500 1184.500 363 1150 359.700C1147 372 1145 386 1144 400L1139 440 1133.300 480C1131 492 1131 500 1128 510 1124 530 1116 552 1111 577 1110 590 1115 605 1116 620 1116 648 1108 660 1110 682 1112 706 1126 728 1134 752.500L1172.300 756.500 1169.500 827.500 946 807 948 738 978 739 982 700 989 668 995 642 998 609 998 400 1009.500 347 960 342z" fill="#95969a"/>
        <!-- left cut faces -->
        <path d="M1009.500 347L980 362C980 385 977 405 974 423 971 440 967 448 966 460 964 475 965 490 967 503 970 522 977 528 979 535 982 547 975 555 976 563 978 573 987 583 988.700 595 988 607 976 610 972 618.500 967 628 965 635 965.600 643 967 651 972 655 970.500 662 967 670 963 672 961 679 957 692 955 712 951.500 730L948 738 979 739 983 700 990 668 998 642 996 625 1000 609 1008 594 1007 575 1003 550 1005 528 998.500 480 998.500 455 1004 410z" fill="#98989b"/>
        <path d="M1002 507c5 6 8 14 8 23-1 8-4 12-6 17-2-6 1-14 1-20zM1003.500 551c6 8 13 18 14.500 27-2 7-6 11-10 14z" fill="url(#bump)"/>
        <path d="M968 508l32-14c2 14 5 24 4 34l-26 12c1-8-8-14-10-32z" fill="url(#fold)" opacity=".7"/>
        <path d="M977 564l26-18c5 12 8 30 4 42l-19 7c-1-12-7-19-11-31z" fill="url(#fold)" opacity=".7"/>
        <path d="M966 638l30-16c1 10 4 20-1 34l-24 6c1-7-4-12-5-24z" fill="url(#fold)" opacity=".8"/>
        <path d="M962 270.500L960 342 956.500 359.500 958.500 290z" fill="#74777b"/>
        <path d="M960 342L1009.500 347 980 362 956.500 359.500z" fill="#494b4e"/>
        <path d="M948 738L946 807 942 824.500 944.500 754z" fill="#6d7073"/>
        <path d="M946 807L1169.500 827.500 1167 845.500 942 824.500z" fill="#494b4e"/>
        <!-- sketch geometry -->
        <g fill="none" stroke="#64f010" stroke-width="1.600">
          <path d="M916.500 257L904 697M1234 269.500L1221 718" stroke="#58cf10"/>
          <path d="M1008.500 347C1008 375 1006 395 1004 410 1000 435 998 455 998.300 470 998 485 1000 498 1001.500 506 1004 514 1006 523 1004.500 533 1002 545 1003 552 1004.500 560 1006 570 1009 575 1008.700 584 1008 600 1000 602 998.700 610 995 622 996 632 998 639 1000 650 994 657 993 667 991 680 990 690 989 703L986 756"/>
          <path d="M1136.800 317L1135.700 335C1134 355 1131 365 1130 385L1122 490C1120 515 1115 535 1112.500 562 1110 575 1110 585 1111 595 1114 620 1110 650 1108.500 672 1107 700 1116 722 1121.300 745V766"/>
        </g>
        <path d="M1133.500 333h4.500v4.500h-4.500zM1119 743.500h4.500v4.500H1119z" fill="#5ff000"/>
        <path d="M916.500 257L1006.500 322.500M904 697L985.500 756.500M1234 269.500L1137 316.500M1221 718L1121.500 765.500" stroke="#3e1784" stroke-width="1.400"/>
        <path d="M983 754h5v5h-5z" fill="#33107c"/>
        <path d="M1111 578l3.500-1v16l-3.500 1z" fill="#454a78"/><path d="M1109 578.500l5.500-2v17l-5.500 1" fill="none" stroke="#b3a42c" stroke-width=".8"/>
        <path d="M1196 277.500h2.500v2.500H1196z" fill="#e8e010"/>
        <!-- axis triad -->
        <path d="M228 964.500l10 .5v5" fill="none" stroke="#18a018"/><path d="M223 963.500l6-2.500v5z" fill="#10a010"/><text x="218" y="966" font-size="5" fill="#20c020">Y</text>
        <path d="M238 968v5" stroke="#d02020"/><circle cx="236.500" cy="970.500" r="2.500" fill="#1818a0"/><circle cx="238" cy="973" r="3" fill="#b80c14"/><text x="236" y="981" font-size="6" fill="#f04040">X</text>
        <!-- view cube -->
        <path d="M1880.500 163L1905 165 1906 185 1901 198 1878 196z" fill="#8b8b8b"/><path d="M1905 165l1 20-5 13z" fill="#6c6c6c"/>
        <path d="M1884 179l16-1v7l-16 1z" fill="#7c7f86"/>
        <text transform="translate(1895 178) rotate(-88)" font-size="5" fill="#555">BACK</text><text transform="translate(1893 195) rotate(-88)" font-size="5" fill="#555">RIGHT</text>
      </svg>
      <div class="absolute top-1 right-0 flex items-center gap-1 text-white">
        <button aria-label="Minimize document"><svg class="block h-1.5 w-[6px]" viewBox="0 0 6 6"><path d="M0 4h6v1.500H0z" fill="#eee"/></svg></button>
        <button aria-label="Restore document"><svg class="block size-1.5" viewBox="0 0 6 6"><path d="M.5 2.500h3v3h-3zM2 2V.5h3.500V4H4" fill="none" stroke="#eee"/></svg></button>
        <button aria-label="Close document"><svg class="block h-1.5 w-1" viewBox="0 0 4 6"><path d="M0 1l4 4M4 1L0 5" stroke="#eee" stroke-width="1.500"/></svg></button>
      </div>
      <div class="absolute top-[73px] right-0 flex h-[99px] w-[15px] flex-col items-center rounded-l-sm bg-[#6f6f6f]">
        <svg class="h-full w-full" viewBox="0 0 15 99"><circle cx="12" cy="3.500" r="1.500" fill="#333"/><circle cx="8" cy="16" r="5.500" fill="#b4b6b9"/><circle cx="8" cy="16" r="3" fill="none" stroke="#7c7f84" stroke-width="1.500"/><path d="M6.500 27h3L8 29zM6.500 58h3L8 60zM6.500 75h3L8 77z" fill="#3a3a3a"/><path d="M1 30h14" stroke="#595959"/><path d="M4 38l2 3v-5h1v4-5h1v5-4h1.200v4l1.300-2 .5 1-2 4H6z" fill="#b8b8b8" stroke="#a4a4a4" stroke-width=".6"/><circle cx="7" cy="49" r="3" fill="#98a0a8" stroke="#b4b4b4"/><path d="M9 51l3 3" stroke="#b4b4b4" stroke-width="1.500"/><path d="M8 62l2 3h-4zM8 72l2-3H6zM3 67l3-2v4zM13 67l-3-2v4z" fill="#7c7c7c" stroke="#555" stroke-width=".5"/><path d="M3 82h10v6H3zM5 80h6" fill="#7f8286" stroke="#a4a4a4"/><circle cx="12" cy="95" r="1.500" fill="#333"/></svg>
      </div>
    </div>
    <!-- Document tabs -->
    <nav aria-label="Documents" class="flex h-[22px] shrink-0 items-start border-t border-[#666] bg-linear-to-b from-[#dcdcdc] to-[#b4b4b4] text-xs leading-5 text-[#222]">
      <button aria-label="Cascade" class="flex h-5 w-5 items-center justify-center border border-[#666] bg-[#d0d2d6]"><svg class="size-4" viewBox="0 0 16 16"><path d="M.5 1.500h10v7h-10zM3 4.500h10v7H3zM5.500 7.500h10v7h-10z" fill="#dfe1e4" stroke="#444a54" stroke-width="1.300"/></svg></button>
      <button aria-label="Tile" class="flex h-5 w-5 items-center justify-center border border-[#666] bg-[#d0d2d6]"><svg class="size-4" viewBox="0 0 16 16"><path d="M1.500 2.500h5v4h-5zM9.500 2.500h5v4h-5zM1.500 9.500h5v4h-5zM9.500 9.500h5v4h-5z" fill="#eee" stroke="#444a54" stroke-width="1.300"/></svg></button>
      <button aria-label="More" class="flex h-5 w-5 justify-center border border-[#666] bg-[#e4e6ea] pt-0.5"><svg class="h-[5px] w-[9px] rotate-180 text-[#444]"><use href="#caret"/></svg></button>
      <a href="#" class="h-[18px] w-[71px] rounded-b-md border-x border-b border-[#666] bg-[#c6c6c6] text-center">My Home</a>
      <a href="#" class="flex h-[19px] w-[106px] justify-between rounded-b-md border-r border-b border-[#888] bg-white px-2">SeatCenter.ipt<svg class="mt-0.5 size-2" viewBox="0 0 8 8"><path d="M.5.5h7v7h-7z" fill="#ddd" stroke="#aaa"/><path d="M1.500 1.500l5 5M6.500 1.500l-5 5" stroke="#666"/></svg></a>
    </nav>
  </div>
</main>

<!-- Status bar -->
<footer class="flex h-[22px] shrink-0 items-center justify-between border-b border-[#888] bg-linear-to-b from-[#f8f8f8] to-[#b0b0b0] pt-1 text-[11px] leading-4 text-[#222]">
  <span>Ready</span>
  <span class="flex"><span class="w-5 border-l border-[#ccc] text-center">1</span><span class="w-[17px] border-l border-[#ccc] text-center">1</span></span>
</footer>

<!-- Taskbar -->
<nav aria-label="Taskbar" class="flex h-[45px] shrink-0 items-center bg-linear-to-b from-[#6896aa] to-[#5f8b9f]">
  <button aria-label="Start" class="flex w-[60px] justify-center"><svg class="size-7" viewBox="0 0 28 28"><path d="M1 4.500L12 3v10.500H1zM13 2.800L27 1v12.500H13zM1 14.500h11V25L1 23.500zM13 14.500h14V27l-14-1.800z" fill="#fff" stroke="#557f92" stroke-width=".6"/></svg></button>
  <button aria-label="SolidWorks" class="flex w-[73px] justify-center"><svg class="size-8" viewBox="0 0 32 32"><path d="M16 1l15 5v19L16 31 1 25V6z" fill="#c81418"/><path d="M16 1l15 5-15 6L1 6z" fill="#f25a50"/><path d="M16 12l15-6v19l-15 6z" fill="#a00c10"/><text x="3" y="24" font-size="17" font-weight="700" font-family="Liberation Sans" fill="#fff">S</text><text x="15" y="24" font-size="16" font-weight="700" font-family="Liberation Sans" fill="#fff">W</text></svg></button>
  <button aria-label="File Explorer" class="flex w-[75px] justify-center"><svg class="size-8" viewBox="0 0 32 32"><path d="M1 6l3-3h12l2 3h11l2 3v20H1z" fill="#e8c868" stroke="#b49440"/><path d="M3 5h12l2 3h12v5H3z" fill="#fff"/><path d="M4 4h4v2H4z" fill="#2fae48"/><path d="M13 6h4v2h-4z" fill="#d84030"/><path d="M21 8h4v2h-4z" fill="#3aa0e8"/><path d="M1 9h14l2 3h14v17H1z" fill="#f8e6a0" stroke="#cfae58" stroke-width=".6"/><path d="M5 31V22c0-3 2-4 4-4h15c2 0 4 1 4 4v9h-5v-7H10v7z" fill="#9ed0ee" stroke="#5c9cc8"/></svg></button>
  <button aria-label="Fusion 360" class="flex w-[74px] justify-center"><svg class="size-8" viewBox="0 0 32 32"><path d="M0 0h32v32H0z" fill="#ece8e6"/><path d="M10 7l10-5 4 4-7 4v1l7-2-1 5-6 4v6l-6 1z" fill="#e07c28"/><path d="M10 7l7 3v14l-6 1z" fill="#b4561a"/><path d="M0 25h32v7H0z" fill="#2f9ed0"/><path d="M0 25h14v7H0z" fill="#c8e2f0"/><text x="18" y="31" font-size="7" font-weight="700" fill="#fff">360</text></svg></button>
  <button aria-label="Inventor" class="flex h-[45px] w-[73px] items-center justify-center border-2 border-[#dbe7ed] bg-[#97b6c3] outline-1 -outline-offset-1 outline-[#4d6f7e]"><svg class="size-8" viewBox="0 0 32 32"><path d="M0 0h32v32H0z" fill="#ece6e2"/><path d="M0 25h32v7H0z" fill="#dcc8bc"/><path d="M9 3h14v5l-4 2v8l4 2v4H9v-4l4-2v-8L9 8z" fill="#c45e1c"/><path d="M9 3h14v3H9zM13 10h3v8h-3zM9 20h14v2H9z" fill="#ee8a38"/><text x="18.500" y="31" font-size="6.500" font-weight="700" fill="#444">PRO</text></svg></button>
  <button aria-label="Firefox" class="flex w-[75px] justify-center"><svg class="size-8" viewBox="0 0 32 32"><circle cx="17" cy="15" r="13.500" fill="#1c68b4"/><path d="M10 5c4-4 13-4 17 2-5-1-8 0-9 3z" fill="#58b4e8"/><path d="M26 5c7 7 6 19-2 24 4-5 5-14 2-24z" fill="#fbd838"/><path d="M2 6c2 1 3 2 6 2 3-1 5-1 7 1-2 1-3 2-3 4l3 1c-1 2-4 2-4 4 1 3 5 4 9 3 4-2 4-3 6-8 3 9-1 17-10 18C7 31 0 23 1 13z" fill="#e0661c"/><path d="M26 8c5 7 4 17-4 21-4 2-8 2-11 0 11 0 17-9 15-21z" fill="#f59a24"/></svg></button>
  <div class="ml-auto flex items-center gap-4 pr-[33px]">
    <button aria-label="Show hidden icons" class="mr-2"><svg class="block h-2.5 w-4" viewBox="0 0 16 10"><path d="M8 .5L15.500 9.500H.5z" fill="#f0f0f0" stroke="#7c98a6" stroke-width=".8"/></svg></button>
    <svg class="size-8" viewBox="0 0 32 32" aria-label="Action Center"><path d="M1 1h4v30H1z" fill="#fff" stroke="#2f4c5a" stroke-width="1.500"/><path d="M5 3c7-3 10 0 15 3 3 2 7 3 11 3-2 5-6 9-12 8-5-1-9-2-14 1z" fill="#f2f4f6" stroke="#2f4c5a" stroke-width="1.500"/><circle cx="24" cy="24" r="8" fill="#dc1c1c"/><path d="M21 21l6 6M27 21l-6 6" stroke="#fff" stroke-width="2.500"/></svg>
    <svg class="size-8" viewBox="0 0 32 32" aria-label="Power"><g stroke="#2f4c5a" stroke-width="1.300"><path d="M3 1h3v7h2V1h3v7h2v6c0 3-1 4-4 4v13H5V18c-3 0-4-1-4-4V8h2z" fill="#fff"/><path d="M14 4h5V1h7v3h5v27H14z" fill="#fff"/><path d="M18 8h9v19h-9z" fill="#6f97a8"/></g><path d="M20 10h5v15h-5z" fill="#fff"/></svg>
    <svg class="size-8" viewBox="0 0 32 32" aria-label="Network"><path d="M9 3h22v19H22v3h4v4H12v-4h4v-3H9z" fill="#fff" stroke="#2f4c5a" stroke-width="1.500"/><path d="M11 6h17v13H11z" fill="#6492a6" stroke="#2f4c5a"/><path d="M1 1h10v10L8 14v14H4V14l-3-3z" fill="#fff" stroke="#2f4c5a" stroke-width="1.500"/><path d="M4.500 4h3v5h-3z" fill="#fff" stroke="#2f4c5a" stroke-width="1.500"/></svg>
    <svg class="size-8" viewBox="0 0 32 32" aria-label="Volume"><path d="M1 9h5l9-8v30l-9-8H1z" fill="#fff" stroke="#2f4c5a" stroke-width="1.500"/><path d="M6 9v14" stroke="#2f4c5a" stroke-width="1.300"/><path d="M19 12c2 2 2 6 0 8M23 9c4 4 4 10 0 14M27 6c5 5 5 15 0 20" fill="none" stroke="#e8f0f4" stroke-width="1.500"/></svg>
    <time class="ml-[21px] pt-0.5 text-[23px] leading-8 whitespace-nowrap text-white">4:02 PM</time>
  </div>
</nav>
</body>
</html>
